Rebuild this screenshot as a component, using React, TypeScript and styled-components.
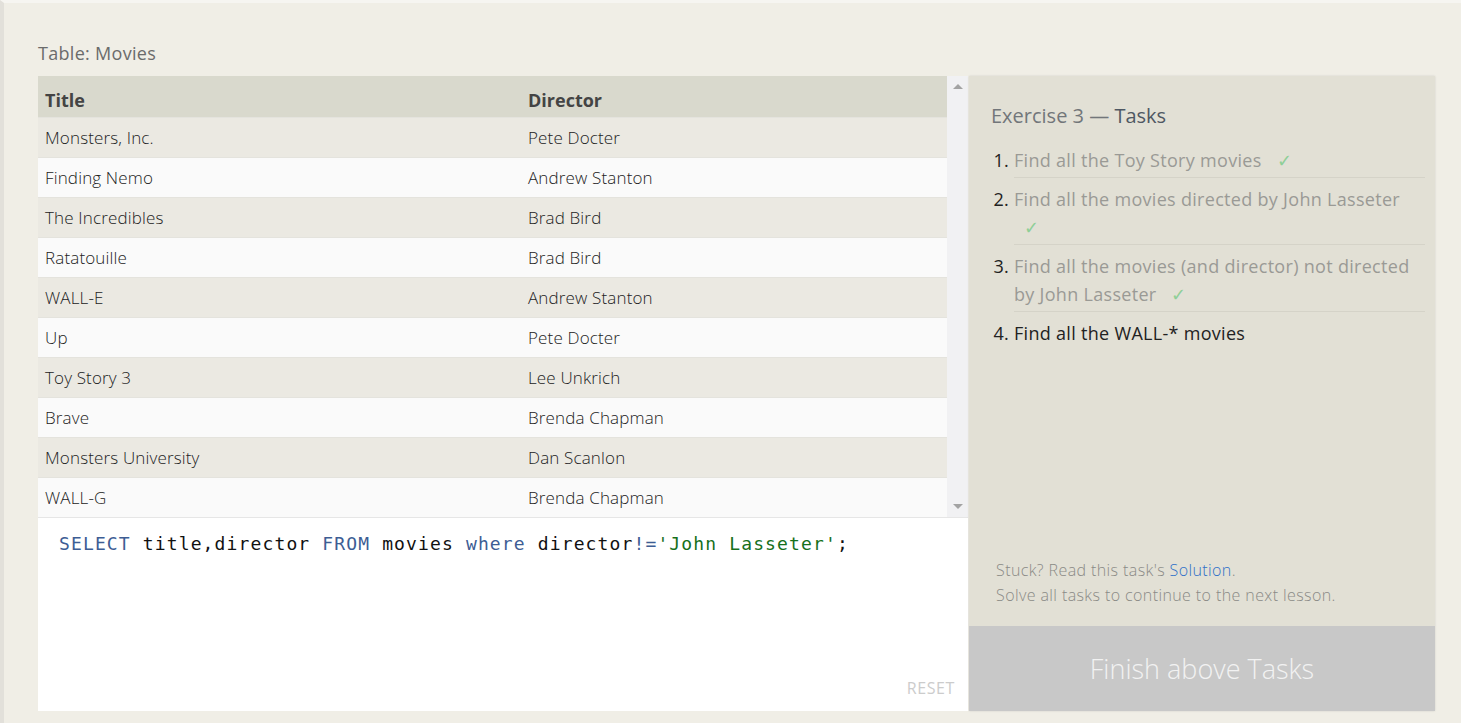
import React from "react";
import styled, { createGlobalStyle } from "styled-components";

const GlobalStyle = createGlobalStyle`
  html, body { margin: 0; padding: 0; background: #f0eee6; }
  body { font-family: "Open Sans", "Noto Sans", sans-serif; }
  * { box-sizing: border-box; }
`;

const Page = styled.div`
  min-height: 723px;
  background: #f0eee6;
  border-top: 3px solid #f6f5f1;
  border-left: 4px solid #e2e0da;
  padding: 38px 26px 0 34px;
`;

const Label = styled.div`
  font-size: 18px;
  line-height: 24px;
  letter-spacing: 0.3px;
  color: #6b6b6b;
  margin-bottom: 11px;
`;

const Workspace = styled.div`
  display: grid;
  grid-template-columns: 931px 466px;
  height: 635px;
`;

const LeftColumn = styled.div`
  display: flex;
  flex-direction: column;
  width: 930px;
`;

const TableArea = styled.div`
  display: flex;
  height: 442px;
  border-bottom: 1px solid #e6e6e6;
`;

const Table = styled.div`
  flex: 1;
  display: flex;
  flex-direction: column;
`;

const HeaderRow = styled.div`
  display: grid;
  grid-template-columns: 483px 1fr;
  height: 41px;
  align-items: center;
  background: #d9d9cd;
  font-weight: 700;
  font-size: 18px;
  color: #444;
  padding: 6px 0 0 7px;
`;

const Row = styled.div<{ $odd: boolean }>`
  display: grid;
  grid-template-columns: 483px 1fr;
  height: 40px;
  align-items: center;
  padding-left: 7px;
  background: ${(p) => (p.$odd ? "#ebe9e2" : "#fafafa")};
  border-top: 1px solid #e4e3dd;
  font-size: 17px;
  font-weight: 300;
  letter-spacing: 0.15px;
  color: #222;
`;

const Scrollbar = styled.div`
  width: 21px;
  background: #f1f1f3;
  display: flex;
  flex-direction: column;
  justify-content: space-between;
  align-items: center;
  padding: 8px 0 8px 0;
`;

const Arrow = styled.div<{ $down?: boolean }>`
  width: 0;
  height: 0;
  border-left: 5px solid transparent;
  border-right: 5px solid transparent;
  ${(p) =>
    p.$down
      ? "border-top: 5px solid #a3a3a3;"
      : "border-bottom: 5px solid #a3a3a3;"}
`;

const Editor = styled.div`
  position: relative;
  flex: 1;
  background: #ffffff;
  padding: 14px 21px 12px 21px;
  font-family: "DejaVu Sans Mono", "Liberation Mono", monospace;
  font-size: 18px;
  line-height: 24px;
  letter-spacing: 1.13px;
  color: #111;
  white-space: pre;
`;

const Kw = styled.span`
  color: #3d5d94;
`;

const Str = styled.span`
  color: #16701b;
`;

const Reset = styled.div`
  position: absolute;
  right: 13px;
  bottom: 11px;
  font-family: "Open Sans", sans-serif;
  font-size: 16px;
  letter-spacing: 0.6px;
  color: #cccccc;
`;

const Panel = styled.div`
  display: flex;
  flex-direction: column;
  background: #e2e0d5;
  box-shadow: 0 0 2px rgba(0, 0, 0, 0.12);
`;

const Tasks = styled.div`
  flex: 1;
  padding: 26px 10px 0 22px;
`;

const TasksTitle = styled.h2`
  margin: 0 0 9px 0;
  font-size: 20px;
  line-height: 28px;
  font-weight: 400;
  color: #72767a;
`;

const Strong = styled.span`
  color: #4f5863;
`;

const TaskList = styled.ol`
  margin: 0;
  padding: 0 0 0 23px;
`;

const Task = styled.li<{ $last?: boolean }>`
  font-size: 18px;
  line-height: 28px;
  letter-spacing: 0.3px;
  color: #222;
  padding: 7px 0 3px 0;
  border-bottom: ${(p) => (p.$last ? "none" : "1px solid #d5d3c8")};
`;

const TaskText = styled.span<{ $done: boolean }>`
  color: ${(p) => (p.$done ? "#9a9a95" : "#222")};
`;

const Check = styled.span`
  display: inline-block;
  color: #8fcf97;
  margin-left: 10px;
`;

const Help = styled.div`
  padding: 0 10px 18px 27px;
  font-size: 16px;
  line-height: 25px;
  font-weight: 300;
  letter-spacing: 0.4px;
  color: #8a8a86;
`;

const Link = styled.a`
  color: #2f6fc8;
  text-decoration: none;
`;

const FinishButton = styled.div`
  height: 85px;
  background: #c8c8c8;
  color: #f2f2f2;
  font-size: 27px;
  font-weight: 300;
  display: flex;
  align-items: center;
  justify-content: center;
`;

const movies = [
  ["Monsters, Inc.", "Pete Docter"],
  ["Finding Nemo", "Andrew Stanton"],
  ["The Incredibles", "Brad Bird"],
  ["Ratatouille", "Brad Bird"],
  ["WALL-E", "Andrew Stanton"],
  ["Up", "Pete Docter"],
  ["Toy Story 3", "Lee Unkrich"],
  ["Brave", "Brenda Chapman"],
  ["Monsters University", "Dan Scanlon"],
  ["WALL-G", "Brenda Chapman"],
];

const tasks = [
  { text: "Find all the Toy Story movies", done: true },
  { text: "Find all the movies directed by John Lasseter", done: true },
  { text: "Find all the movies (and director) not directed by John Lasseter", done: true },
  { text: "Find all the WALL-* movies", done: false },
];

export default function App() {
  return (
    <>
      <GlobalStyle />
      <Page>
        <Label>Table: Movies</Label>
        <Workspace>
          <LeftColumn>
            <TableArea>
              <Table>
                <HeaderRow>
                  <span>Title</span>
                  <span>Director</span>
                </HeaderRow>
                {movies.map(([t, d], i) => (
                  <Row key={t} $odd={i % 2 === 0}>
                    <span>{t}</span>
                    <span>{d}</span>
                  </Row>
                ))}
              </Table>
              <Scrollbar>
                <Arrow />
                <Arrow $down />
              </Scrollbar>
            </TableArea>
            <Editor>
              <Kw>SELECT</Kw> title,director <Kw>FROM</Kw> movies <Kw>where</Kw> director<Kw>!=</Kw>
              <Str>'John Lasseter'</Str>;
              <Reset>RESET</Reset>
            </Editor>
          </LeftColumn>
          <Panel>
            <Tasks>
              <TasksTitle>
                Exercise 3 — <Strong>Tasks</Strong>
              </TasksTitle>
              <TaskList>
                {tasks.map((t, i) => (
                  <Task key={t.text} $last={i === tasks.length - 1}>
                    <TaskText $done={t.done}>{t.text}</TaskText>{" "}
                    {t.done && <Check>✓</Check>}
                  </Task>
                ))}
              </TaskList>
            </Tasks>
            <Help>
              Stuck? Read this task's <Link href="#">Solution</Link>.
              <br />
              Solve all tasks to continue to the next lesson.
            </Help>
            <FinishButton>Finish above Tasks</FinishButton>
          </Panel>
        </Workspace>
      </Page>
    </>
  );
}
